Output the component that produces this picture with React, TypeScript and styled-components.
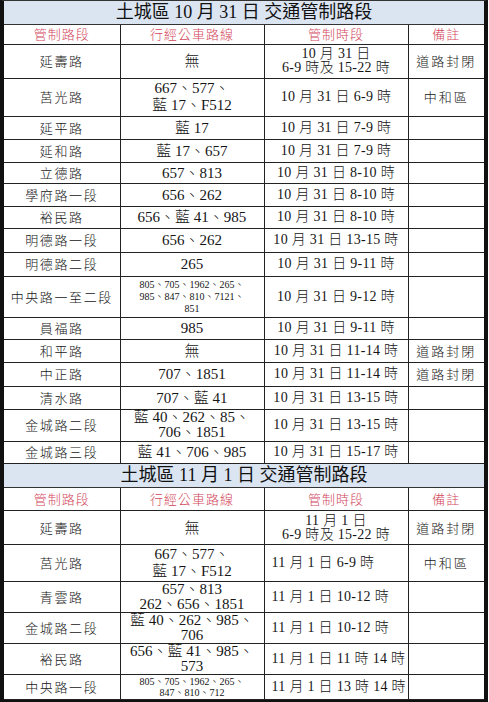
import styled, { createGlobalStyle } from "styled-components";

const GlobalStyle = createGlobalStyle`
  html, body {
    margin: 0;
    padding: 0;
    background: #fff;
  }

  body {
    font-family: "Liberation Serif", "Noto Sans CJK TC", serif;
    font-weight: 300;
    color: #151515;
  }
`;

type Row = {
  road: string;
  bus: string[];
  small?: boolean;
  lh?: number;
  time: string[];
  note?: string;
  h: number;
};

type Section = {
  title: string;
  titleH: number;
  headH: number;
  left?: boolean;
  rows: Row[];
};

const sections: Section[] = [
  {
    title: "土城區 10 月 31 日 交通管制路段",
    titleH: 23,
    headH: 20,
    rows: [
      { road: "延壽路", bus: ["無"], time: ["10 月 31 日", "6-9 時及 15-22 時"], note: "道路封閉", h: 34 },
      { road: "莒光路", bus: ["667、577、", "藍 17、F512"], lh: 17, time: ["10 月 31 日 6-9 時"], note: "中和區", h: 38 },
      { road: "延平路", bus: ["藍 17"], time: ["10 月 31 日 7-9 時"], h: 23 },
      { road: "延和路", bus: ["藍 17、657"], time: ["10 月 31 日 7-9 時"], h: 23 },
      { road: "立德路", bus: ["657、813"], time: ["10 月 31 日 8-10 時"], h: 21 },
      { road: "學府路一段", bus: ["656、262"], time: ["10 月 31 日 8-10 時"], h: 23 },
      { road: "裕民路", bus: ["656、藍 41、985"], time: ["10 月 31 日 8-10 時"], h: 22 },
      { road: "明德路一段", bus: ["656、262"], time: ["10 月 31 日 13-15 時"], h: 24 },
      { road: "明德路二段", bus: ["265"], time: ["10 月 31 日 9-11 時"], h: 24 },
      {
        road: "中央路一至二段",
        bus: ["805、705、1962、265、", "985、847、810、7121、", "851"],
        small: true,
        lh: 12,
        time: ["10 月 31 日 9-12 時"],
        h: 41,
      },
      { road: "員福路", bus: ["985"], time: ["10 月 31 日 9-11 時"], h: 22 },
      { road: "和平路", bus: ["無"], time: ["10 月 31 日 11-14 時"], note: "道路封閉", h: 23 },
      { road: "中正路", bus: ["707、1851"], time: ["10 月 31 日 11-14 時"], note: "道路封閉", h: 24 },
      { road: "清水路", bus: ["707、藍 41"], time: ["10 月 31 日 13-15 時"], h: 23 },
      { road: "金城路二段", bus: ["藍 40、262、85、", "706、1851"], lh: 15, time: ["10 月 31 日 13-15 時"], h: 32 },
      { road: "金城路三段", bus: ["藍 41、706、985"], time: ["10 月 31 日 15-17 時"], h: 22 },
    ],
  },
  {
    title: "土城區 11 月 1 日 交通管制路段",
    titleH: 24,
    headH: 23,
    left: true,
    rows: [
      { road: "延壽路", bus: ["無"], time: ["11 月 1 日", "6-9 時及 15-22 時"], note: "道路封閉", h: 34 },
      { road: "莒光路", bus: ["667、577、", "藍 17、F512"], lh: 17, time: ["11 月 1 日 6-9 時"], note: "中和區", h: 37 },
      { road: "青雲路", bus: ["657、813", "262、656、1851"], lh: 15, time: ["11 月 1 日 10-12 時"], h: 30 },
      { road: "金城路二段", bus: ["藍 40、262、985、", "706"], lh: 15, time: ["11 月 1 日 10-12 時"], h: 31 },
      { road: "裕民路", bus: ["656、藍 41、985、", "573"], lh: 15, time: ["11 月 1 日 11 時 14 時"], h: 30 },
      {
        road: "中央路一段",
        bus: ["805、705、1962、265、", "847、810、712"],
        small: true,
        lh: 11,
        time: ["11 月 1 日 13 時 14 時"],
        h: 25,
      },
    ],
  },
];

const Sheet = styled.div`
  width: 488px;
  box-sizing: border-box;
  border-left: 4px solid #111;
  border-right: 4px solid #111;
  border-bottom: 4px solid #111;
  border-top: 1px solid #333;
`;

const Table = styled.table`
  width: 100%;
  border-collapse: collapse;
  table-layout: fixed;
`;

const TitleRow = styled.tr<{ $h: number }>`
  height: ${(p) => p.$h}px;
`;

const TitleCell = styled.td`
  padding: 0;
  background: #dbe5f1;
  border-bottom: 1px solid #333;
  text-align: center;
  font-size: 18px;
  line-height: 20px;
  font-weight: 400;
  color: #111;
`;

const HeadRow = styled.tr<{ $h: number }>`
  height: ${(p) => p.$h}px;
`;

const HeadCell = styled.td`
  padding: 0;
  border: 1px solid #222;
  text-align: center;
  font-size: 13px;
  line-height: 15px;
  letter-spacing: 1px;
  color: #d2455a;

  &:first-child {
    border-left: none;
  }

  &:last-child {
    border-right: none;
  }
`;

const BodyRow = styled.tr<{ $h: number }>`
  height: ${(p) => p.$h}px;
`;

const Cell = styled.td<{ $left?: boolean }>`
  padding: ${(p) => (p.$left ? "0 0 0 7px" : "0")};
  border: 1px solid #222;
  text-align: ${(p) => (p.$left ? "left" : "center")};
  vertical-align: middle;

  &:first-child {
    border-left: none;
  }

  &:last-child {
    border-right: none;
  }
`;

const Road = styled.span`
  font-size: 13px;
  line-height: 15px;
  letter-spacing: 1.6px;
`;

const Lines = styled.div<{ $size: number; $lh: number }>`
  display: flex;
  flex-direction: column;
  align-items: center;
  font-size: ${(p) => p.$size}px;
  line-height: ${(p) => p.$lh}px;
  white-space: nowrap;
`;

const TimeText = styled.div<{ $left?: boolean }>`
  display: flex;
  flex-direction: column;
  align-items: ${(p) => (p.$left ? "flex-start" : "center")};
  font-size: 14px;
  line-height: 14px;
  letter-spacing: 0.3px;
  white-space: nowrap;
`;

const Note = styled.span`
  font-size: 13px;
  line-height: 15px;
  letter-spacing: 2px;
`;

const SectionTable = ({ section }: { section: Section }) => (
  <Table>
    <colgroup>
      <col style={{ width: 116 }} />
      <col style={{ width: 144 }} />
      <col style={{ width: 144 }} />
      <col style={{ width: 76 }} />
    </colgroup>
    <tbody>
      <TitleRow $h={section.titleH}>
        <TitleCell colSpan={4}>{section.title}</TitleCell>
      </TitleRow>
      <HeadRow $h={section.headH}>
        <HeadCell>管制路段</HeadCell>
        <HeadCell>行經公車路線</HeadCell>
        <HeadCell>管制時段</HeadCell>
        <HeadCell>備註</HeadCell>
      </HeadRow>
      {section.rows.map((row) => {
        const leftTime = section.left && row.time.length === 1;
        return (
          <BodyRow key={row.road + row.h} $h={row.h}>
            <Cell>
              <Road>{row.road}</Road>
            </Cell>
            <Cell>
              <Lines $size={row.small ? 10 : 15} $lh={row.lh ?? 14}>
                {row.bus.map((line) => (
                  <span key={line}>{line}</span>
                ))}
              </Lines>
            </Cell>
            <Cell $left={leftTime}>
              <TimeText $left={leftTime}>
                {row.time.map((line) => (
                  <span key={line}>{line}</span>
                ))}
              </TimeText>
            </Cell>
            <Cell>{row.note && <Note>{row.note}</Note>}</Cell>
          </BodyRow>
        );
      })}
    </tbody>
  </Table>
);

export default function App() {
  return (
    <>
      <GlobalStyle />
      <Sheet>
        {sections.map((s) => (
          <SectionTable key={s.title} section={s} />
        ))}
      </Sheet>
    </>
  );
}
